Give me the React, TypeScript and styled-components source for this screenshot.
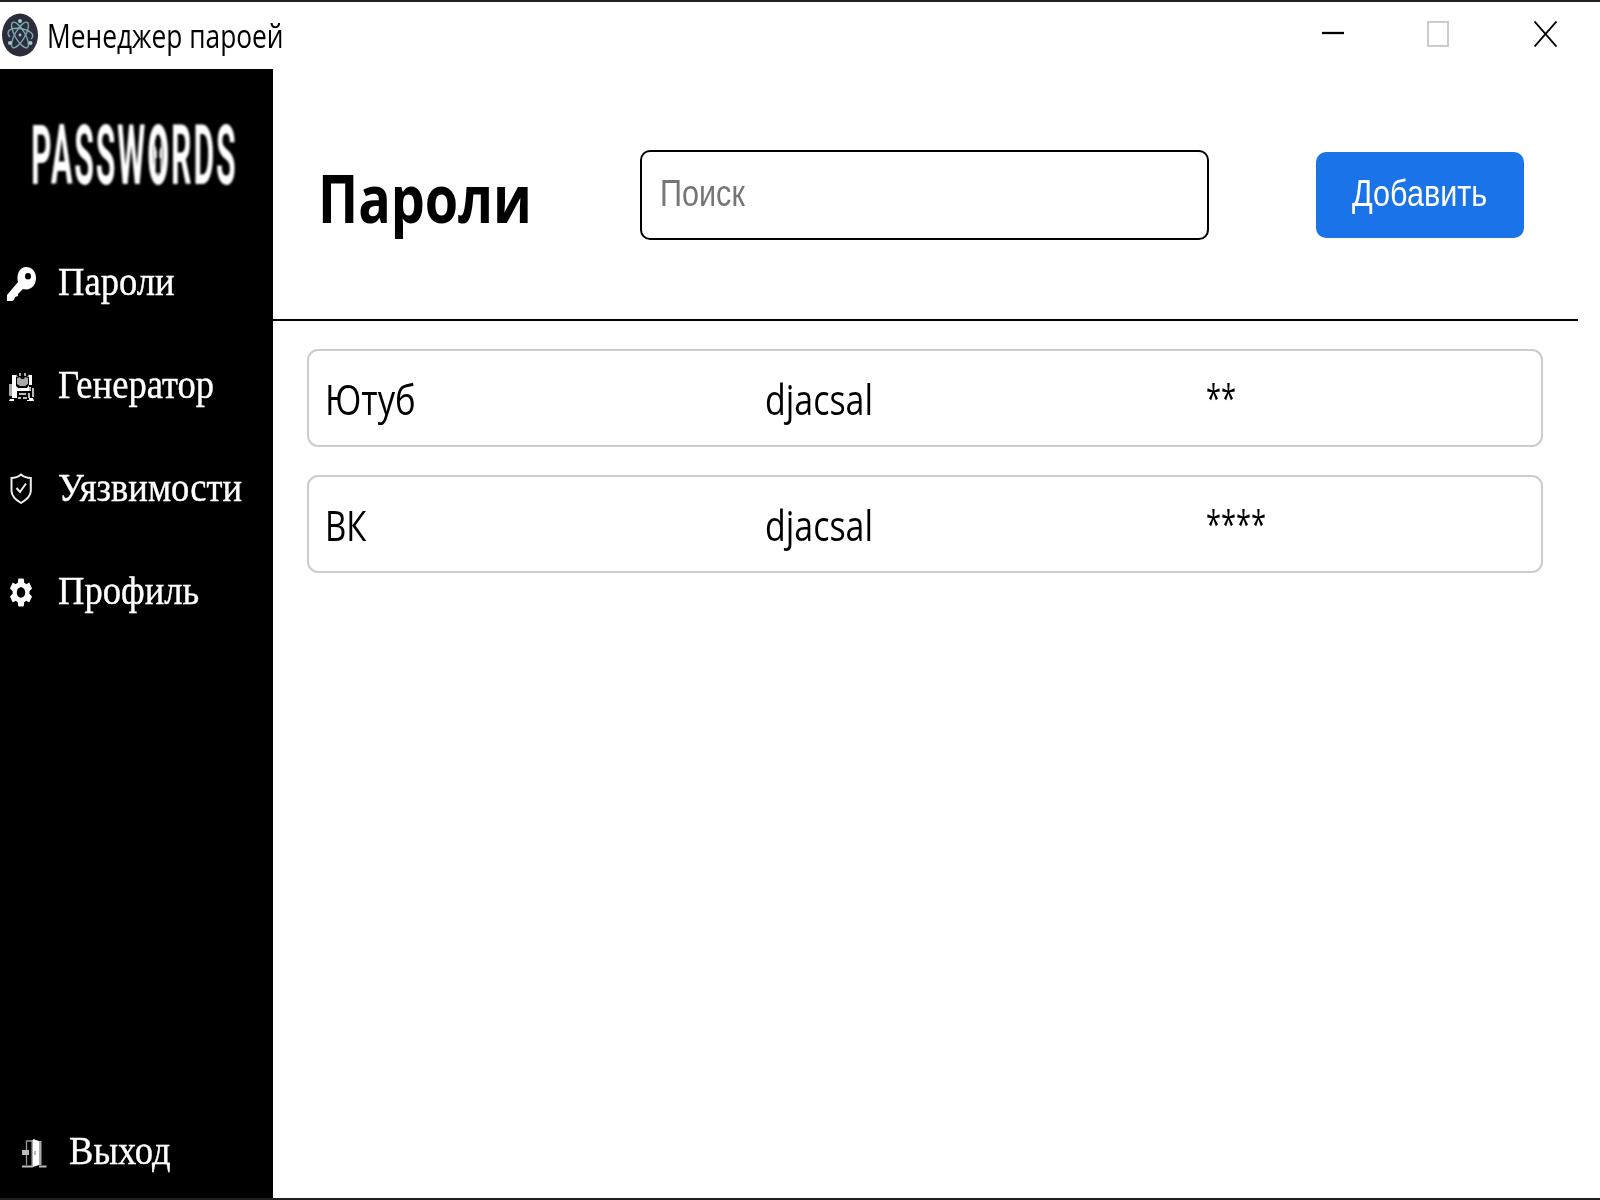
import React from "react";
import styled, { createGlobalStyle } from "styled-components";

const GlobalStyle = createGlobalStyle`
  * { box-sizing: border-box; }
  body { margin: 0; background: #fff; overflow: hidden; }
`;

const sans = `"Open Sans", "Noto Sans", sans-serif`;
const serif = `"Liberation Serif", serif`;
const arial = `"Liberation Sans", Arial, sans-serif`;

const Window = styled.div`
  width: 1600px;
  height: 1200px;
  display: flex;
  flex-direction: column;
  background: #fff;
  border-top: 2px solid #242224;
  border-bottom: 2px solid #211d21;
`;

const TitleBar = styled.header`
  height: 66.5px;
  flex: none;
  display: flex;
  align-items: center;
  justify-content: space-between;
  padding: 0 43px 0 2px;
`;

const Brand = styled.div`
  display: flex;
  align-items: center;
  gap: 9px;
`;

const Text = styled.span<{ $size: number; $scale: number; $font: string; $weight?: number; $color?: string; $stroke?: number }>`
  display: block;
  white-space: nowrap;
  font-family: ${(p) => p.$font};
  font-size: ${(p) => p.$size}px;
  font-weight: ${(p) => p.$weight ?? 400};
  line-height: 1.2;
  color: ${(p) => p.$color ?? "#000"};
  -webkit-text-stroke: ${(p) => p.$stroke ?? 0}px currentColor;
  transform: scaleX(${(p) => p.$scale});
  transform-origin: left center;
`;

const WindowTitle = styled(Text)`
  padding-top: 2px;
`;

const Mask = styled(Text)`
  padding-bottom: 5px;
`;

const LogoText = styled(Text)`
  letter-spacing: 5px;
`;

const Keyhole = styled.span`
  position: relative;
  &::after {
    content: "";
    position: absolute;
    left: 17px;
    top: 28px;
    width: 23px;
    height: 40px;
    background:
      radial-gradient(ellipse 8px 9px at 50% 9px, #000 90%, transparent 100%),
      linear-gradient(#000, #000) 50% 16px / 7px 10px no-repeat,
      linear-gradient(#000, #000) 50% 24px / 13px 15px no-repeat,
      #fff;
  }
`;

const Controls = styled.div`
  display: grid;
  grid-template-columns: 21px 22px 24px;
  column-gap: 84px;
  align-items: center;
  padding-bottom: 2px;
  svg { display: block; }
  svg:last-child { justify-self: end; }
`;

const Body = styled.div`
  flex: 1;
  display: flex;
  min-height: 0;
`;

const Sidebar = styled.aside`
  width: 273px;
  flex: none;
  display: flex;
  flex-direction: column;
  background: #000;
`;

const Logo = styled.div`
  height: 162px;
  display: flex;
  align-items: center;
  padding: 14px 0 0 31px;
  filter: blur(0.8px);
`;

const Nav = styled.nav`
  display: grid;
  grid-auto-rows: 102.75px;
`;

const NavItem = styled.a<{ $indent?: number }>`
  display: grid;
  grid-template-columns: 52px 1fr;
  align-items: center;
  padding-left: ${(p) => p.$indent ?? 6}px;
  overflow: hidden;
  svg { display: block; margin-top: 4px; }
`;

const Exit = styled.div`
  margin-top: auto;
  height: 95px;
  display: grid;
`;

const Main = styled.main`
  flex: 1;
  display: flex;
  flex-direction: column;
  min-width: 0;
`;

const Header = styled.section`
  width: 1305px;
  height: 252px;
  display: flex;
  align-items: center;
  border-bottom: 2px solid #000;
  padding: 2px 0 0 45px;
`;

const Heading = styled.h1`
  width: 322px;
  margin: 0;
  padding-top: 7px;
`;

const Search = styled.label`
  width: 569px;
  height: 90px;
  display: flex;
  align-items: center;
  border: 2px solid #000;
  border-radius: 10px;
  padding: 0 0 2px 18px;
`;

const AddButton = styled.button`
  width: 208px;
  height: 86px;
  margin-left: 107px;
  border: 0;
  border-radius: 10px;
  background: #1a73e8;
  display: flex;
  align-items: center;
  padding: 0 0 2px 36px;
`;

const List = styled.section`
  display: flex;
  flex-direction: column;
  gap: 28px;
  padding: 28.500px 0 0 34px;
`;

const Row = styled.div`
  width: 1236px;
  height: 98px;
  display: grid;
  grid-template-columns: 440px 441px 1fr;
  align-items: center;
  overflow: hidden;
  border: 2px solid #ccc;
  border-radius: 11px;
  padding: 3px 0 0 16px;
`;

const entries = [
  { name: "Ютуб", nameScale: 0.826, login: "djacsal", mask: "**" },
  { name: "ВК", nameScale: 0.785, login: "djacsal", mask: "****" },
];

const ElectronIcon = () => (
  <svg width="36" height="44" viewBox="0 0 36 44">
    <ellipse cx="18" cy="22" rx="18" ry="21.5" fill="#2b2e3a" />
    <g fill="none" stroke="#7ea9b3" strokeWidth="1.4">
      <ellipse cx="18" cy="22" rx="5" ry="14.5" transform="rotate(30 18 22)" />
      <ellipse cx="18" cy="22" rx="5" ry="14.5" transform="rotate(-30 18 22)" />
      <path d="M8 24C3 19 8 14 18 15.500C28 17 34 22 29 26" />
    </g>
    <g fill="#9fc9d2">
      <circle cx="18" cy="22" r="1.4" />
      <circle cx="18" cy="8" r="2" />
      <circle cx="8" cy="30" r="2" />
      <circle cx="28.500" cy="30" r="2" />
    </g>
  </svg>
);

const KeyIcon = () => (
  <svg width="32" height="36" viewBox="0 0 32 36">
    <path fill="#fff" fillRule="evenodd" d="M20 1C26 1 30 5.500 30 12C30 18.500 26 23.500 20 23.500L17 23L14 26L12 28V30L9 31L8 34L6 35H1V29L12 16C10 8 14 1 20 1ZM22 7A3 3.200 0 1 0 22 13.400A3 3.200 0 1 0 22 7Z" />
  </svg>
);

const GeneratorIcon = () => (
  <svg width="30" height="34" viewBox="0 0 30 34">
    <path fill="#aaa" d="M3 14H6V26H3ZM11 8L14 7L15 9L18 9L19 7L22 8V14L19 16H14L11 14ZM13 3H15V6H13ZM18 3H20V6H18ZM10 4L12 7H10ZM23 4L21 7H23Z" />
    <path fill="#fff" d="M6 5H10V16L12 18H21L23 15V5H26V15H23V21H11V28H6Z" />
    <path fill="#bbb" d="M23 17H25V21H23ZM26 18H28V27H26ZM13 23H20V25H13ZM12 27H15V29H12ZM17 27H21V29H17ZM22 23H24V28H22Z" />
    <path fill="#fff" d="M4 29H8V31H3ZM23 28H27L28 31H21V30H23Z" />
  </svg>
);

const ShieldIcon = () => (
  <svg width="30" height="32" viewBox="0 0 30 32" fill="none" stroke="#eee" strokeWidth="2">
    <path d="M15 1.500C18 4 21 5 24.800 5V18C24.800 23 20 27 15 30C10 27 5.500 23 5.500 18V5C9 5 12 4 15 1.500Z" />
    <path d="M10.500 15L14 19L20 10.500" />
  </svg>
);

const GearIcon = () => (
  <svg width="30" height="29" viewBox="-0.8 2 25.600 20" preserveAspectRatio="none">
    <path fill="#fff" d="M19.140 12.940c.040-.300.060-.610.060-.940 0-.320-.020-.640-.070-.940l2.030-1.580c.180-.140.230-.410.120-.610l-1.920-3.320c-.120-.220-.370-.290-.590-.220l-2.390.960c-.500-.380-1.030-.700-1.620-.940l-.360-2.540c-.040-.240-.240-.410-.480-.410h-3.840c-.240 0-.430.170-.470.410l-.360 2.540c-.590.240-1.130.570-1.620.940l-2.390-.960c-.220-.080-.470 0-.590.220L2.740 8.870c-.120.210-.080.470.120.610l2.030 1.580c-.050.300-.090.630-.090.940s.020.640.070.940l-2.030 1.580c-.180.140-.230.410-.120.610l1.920 3.320c.120.220.370.290.590.220l2.390-.960c.500.380 1.030.700 1.620.940l.360 2.540c.050.240.240.410.480.410h3.840c.240 0 .440-.170.470-.410l.360-2.540c.590-.240 1.130-.560 1.620-.940l2.390.960c.220.080.470 0 .590-.220l1.920-3.320c.120-.220.070-.470-.120-.610l-2.010-1.580zM12 15.600c-1.980 0-3.600-1.620-3.600-3.600s1.620-3.600 3.600-3.600 3.600 1.620 3.600 3.600-1.620 3.600-3.600 3.600z" />
  </svg>
);

const DoorIcon = () => (
  <svg width="30" height="32" viewBox="0 0 30 32">
    <path fill="none" stroke="#999" strokeWidth="1.3" d="M9.500 13V4H15M9.500 18V28" />
    <path fill="#bbb" d="M5 13H12V18H5ZM5 28.500H16V30.500H5ZM22 28.500H29.500V30.500H22Z" />
    <path fill="#aaa" d="M14.500 3H17V29H14.500ZM22 4H24.500V28H22Z" />
    <path fill="#fff" d="M16 2L22 4V28L16 30Z" />
    <path fill="#777" d="M17.500 14H18.500V18H17.500Z" />
  </svg>
);

const navItems = [
  { label: "Пароли", Icon: KeyIcon },
  { label: "Генератор", Icon: GeneratorIcon },
  { label: "Уязвимости", Icon: ShieldIcon },
  { label: "Профиль", Icon: GearIcon },
];

export default function App() {
  return (
    <Window>
      <GlobalStyle />
      <TitleBar>
        <Brand>
          <ElectronIcon />
          <WindowTitle $font={sans} $size={32} $scale={0.823}>Менеджер пароей</WindowTitle>
        </Brand>
        <Controls>
          <svg width="22" height="26"><path d="M0 12H22" stroke="#000" strokeWidth="2.300" /></svg>
          <svg width="22" height="26"><rect x="1" y="1" width="20" height="24" fill="none" stroke="#ccc" strokeWidth="2" /></svg>
          <svg width="23" height="26"><path d="M0.500 0.500L22.500 25.500M22.500 0.500L0.500 25.500" stroke="#000" strokeWidth="1.900" /></svg>
        </Controls>
      </TitleBar>
      <Body>
        <Sidebar>
          <Logo>
            <LogoText $font="Roboto, sans-serif" $size={84} $scale={0.38} $weight={700} $color="#fff">
              PASSW<Keyhole>O</Keyhole>RDS
            </LogoText>
          </Logo>
          <Nav>
            {navItems.map(({ label, Icon }) => (
              <NavItem key={label}>
                <Icon />
                <Text $font={serif} $size={41} $scale={0.892} $color="#fff" $stroke={0.4}>{label}</Text>
              </NavItem>
            ))}
          </Nav>
          <Exit>
            <NavItem $indent={17}>
              <DoorIcon />
              <Text $font={serif} $size={41} $scale={0.892} $color="#fff" $stroke={0.4}>Выход</Text>
            </NavItem>
          </Exit>
        </Sidebar>
        <Main>
          <Header>
            <Heading>
              <Text $font={sans} $size={66} $scale={0.817} $weight={700}>Пароли</Text>
            </Heading>
            <Search>
              <Text $font={arial} $size={36} $scale={0.85} $color="#757575">Поиск</Text>
            </Search>
            <AddButton>
              <Text $font={arial} $size={36} $scale={0.85} $color="#fff">Добавить</Text>
            </AddButton>
          </Header>
          <List>
            {entries.map((e) => (
              <Row key={e.name}>
                <Text $font={sans} $size={42} $scale={e.nameScale}>{e.name}</Text>
                <Text $font={sans} $size={42} $scale={0.808}>{e.login}</Text>
                <Mask $font={sans} $size={39} $scale={0.7}>{e.mask}</Mask>
              </Row>
            ))}
          </List>
        </Main>
      </Body>
    </Window>
  );
}
